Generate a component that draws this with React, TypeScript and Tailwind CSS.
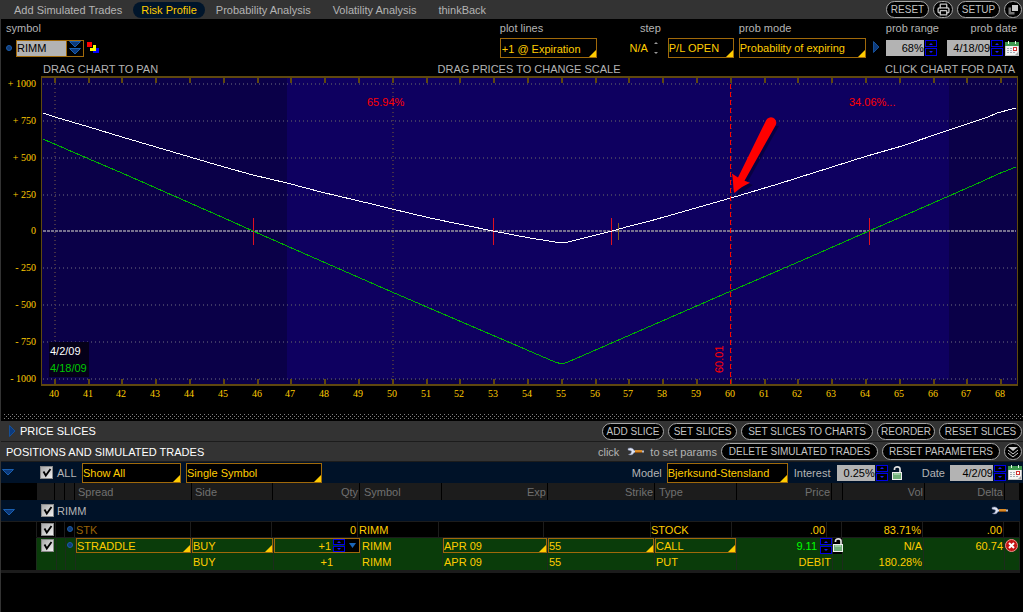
import React from 'react';
import { Printer } from 'lucide-react';

const tabs = ['Add Simulated Trades', 'Risk Profile', 'Probability Analysis', 'Volatility Analysis', 'thinkBack'];

const headers = [
  { name: 'Spread', align: 'text-left pl-[3px]' },
  { name: 'Side', align: 'text-left pl-[3px]' },
  { name: 'Qty', align: 'text-right pr-px' },
  { name: 'Symbol', align: 'text-left pl-1' },
  { name: 'Exp', align: 'text-right pr-px' },
  { name: 'Strike', align: 'text-right pr-px' },
  { name: 'Type', align: 'text-left pl-1' },
  { name: 'Price', align: 'text-right pr-px' },
  { name: '', align: '' },
  { name: 'Vol', align: 'text-right pr-px' },
  { name: 'Delta', align: 'text-right pr-px' },
  { name: '', align: '' }
];

const prices = [1000, 750, 500, 250, 0, -250, -500, -750, -1000];
const strikes = Array.from({ length: 29 }, (_, i) => 40 + i);
const toX = (price: number) => Math.round(54.8 + (price - 40) * 33.8);
const toY = (pl: number) => Math.round(231.4 - pl * 0.1475);

const todayLine =
  '43,113 55,117 89,127 122,137 156,147 190,157 224,167 253,175 287,183 321,192 355,200 376,205 392,209 430,218 493,231 530,238 555,242 562,243 568,242 612,231 630,226 650,221 731,198 778,184 832,167 867,156 902,146 949,130 988,117 997,113 1016,108';
const expirationLine = '43,139 89,159 122,173 156,188 190,203 224,218 253,231 287,246 392,292 555,362 562,364 568,362 630,335 731,291 803,260 869,231 933,203 983,181 998,174 1016,167';

const Dot: React.FC = () => <span className="block h-[6px] w-[6px] shrink-0 rounded-full border border-[#1b5dab] bg-[#123c78]" />;

const DownTriangle: React.FC = () => (
  <svg width="12" height="7" viewBox="0 0 12 7" className="block">
    <path d="M0.5 0.5H11.5L6 6Z" fill="#0c3a7c" stroke="#1a5fb0" />
  </svg>
);

const RightTriangle: React.FC = () => (
  <svg width="7" height="12" viewBox="0 0 7 12" className="block shrink-0">
    <path d="M0.5 0.5V11.5L6 6Z" fill="#0c3a7c" stroke="#164f96" />
  </svg>
);

const Select: React.FC<{ label: string; value: string; className?: string; id?: string }> = ({ label, value, className = '', id }) => (
  <span className={`relative block border border-[#a0690a] ${className}`}>
    <select id={id} aria-label={label} className="block h-full w-full appearance-none bg-transparent text-[#ffcc00] outline-none">
      <option>{value}</option>
    </select>
    <svg width="7" height="7" viewBox="0 0 7 7" className="pointer-events-none absolute right-0 bottom-0">
      <path d="M7 0V7H0Z" fill="#ffcc00" />
    </svg>
  </span>
);

const Spinner: React.FC<{ label: string; small?: boolean }> = ({ label, small }) => (
  <span className="flex w-3 shrink-0 flex-col gap-px">
    <button aria-label={`Increase ${label}`} className={`flex items-center justify-center border border-[#0000e6] bg-black ${small ? 'h-[6px]' : 'h-[7px]'}`}>
      <svg width="4" height="2" viewBox="0 0 4 2" className="block"><path d="M0 2L2 0L4 2Z" fill="#1a1aff" /></svg>
    </button>
    <button aria-label={`Decrease ${label}`} className={`flex items-center justify-center border border-[#0000e6] bg-black ${small ? 'h-[6px]' : 'h-2'}`}>
      <svg width="4" height="2" viewBox="0 0 4 2" className="block"><path d="M0 0L2 2L4 0Z" fill="#1a1aff" /></svg>
    </button>
  </span>
);

const Field: React.FC<{ id: string; value: string; className: string }> = ({ id, value, className }) => (
  <input id={id} type="text" defaultValue={value} className={`block h-4 shrink-0 bg-[#b3b3b3] text-right text-black outline-none ${className}`} />
);

const Calendar: React.FC = () => (
  <svg width="14" height="15" viewBox="0 0 14 15" className="block shrink-0">
    <rect x="0.5" y="1.5" width="13" height="13" fill="#f4f4f4" stroke="#c4c4c4" />
    <rect x="0" y="1" width="14" height="4" fill="#3f9a4f" />
    <path d="M3.5 0V3M10.5 0V3" stroke="#e8ffe8" />
    <path d="M2 7.5h5M2 9.5h5M2 11.5h9" stroke="#a4aab4" strokeDasharray="2 1" />
    <rect x="8.5" y="6.5" width="3" height="3" fill="#fff" stroke="#d03030" />
    <path d="M10 14L13 11V14Z" fill="#aaa" />
  </svg>
);

const Lock: React.FC = () => (
  <svg width="10" height="14" viewBox="0 0 10 14" className="block shrink-0">
    <path d="M2.5 4V3C2.5 1.6 3.8 0.9 5.2 0.9S8 1.6 8 3V6" fill="none" stroke="#e2e2e2" strokeWidth="1.7" />
    <rect x="0.5" y="6.5" width="9" height="7" fill="#6fae78" stroke="#eeeeee" />
    <path d="M2 8h6" stroke="#c4e6c8" />
  </svg>
);

const Wrench: React.FC = () => (
  <svg width="17" height="9" viewBox="0 0 17 9" className="block shrink-0">
    <path d="M1 1.5C4 0 6.5 1.5 7 3.5H9V5.5H7C6 8 3.5 8.5 1.5 7.5L4 6.5L4.5 4L1 3Z" fill="#dfe4f2" stroke="#7a86aa" strokeWidth="0.5" />
    <rect x="8" y="3" width="7" height="3" fill="#d98a26" />
    <path d="M8 5.5H15" stroke="#8c4f10" />
    <rect x="15" y="3.5" width="2" height="2" fill="#b9bccb" />
  </svg>
);

const Check: React.FC<{ label: string; id?: string }> = ({ label, id }) => (
  <span className="relative block h-[13px] w-[13px] shrink-0">
    <input
      id={id}
      type="checkbox"
      defaultChecked
      aria-label={label}
      className="peer block h-[13px] w-[13px] appearance-none border border-[#8a8a8a] bg-gradient-to-br from-[#a8a8a8] to-[#f2f2f2]"
    />
    <svg width="13" height="13" viewBox="0 0 13 13" className="pointer-events-none absolute inset-0 hidden peer-checked:block">
      <path d="M3.5 5.5L5.8 9.5L10.5 3" fill="none" stroke="#000" strokeWidth="1.8" />
    </svg>
  </span>
);

const Pill: React.FC<{ className: string; children: React.ReactNode; label?: string }> = ({ className, children, label }) => (
  <button
    aria-label={label}
    className={`flex h-[17px] shrink-0 items-center justify-center rounded-full border border-[#a8a8a8] bg-black text-[10px] leading-none whitespace-nowrap text-[#c4c4c4] ${label ? '' : 'pt-px'} ${className}`}
  >
    {children}
  </button>
);

const Chart: React.FC = () => (
  <svg viewBox="1 76 1022 337" className="block h-auto w-full" shapeRendering="crispEdges" role="img" aria-label="Risk profile chart">
    <rect x="42" y="77" width="975" height="308" fill="#0a0048" />
    <rect x="287" y="78" width="662" height="301" fill="#0e0060" />

    {/* Grid */}
    {prices.map((p) => (
      <path
        key={p}
        d={`M43 ${toY(p)}H1016`}
        stroke={p === 0 ? '#77718f' : '#3d3764'}
        strokeWidth="2"
        strokeDasharray={p === 0 ? '3 1' : '1 3'}
      />
    ))}
    {[40, 50, 60].map((p) => (
      <path key={p} d={`M${toX(p)} 84V384`} stroke="#443048" strokeWidth="2" strokeDasharray="1 3" />
    ))}

    {/* Frame and ticks */}
    <path d="M41 77H1018M41 385H1018" stroke="#5f480e" strokeWidth="2" />
    <path d="M41.5 76V386M1017.5 76V386" stroke="#5f480e" />
    {strikes.map((s) => (
      <path key={s} d={`M${toX(s)} 78V83M${toX(s)} 379V384`} stroke="#5f480e" strokeWidth="2" />
    ))}

    {/* Profit and loss curves */}
    <path d="M253.5 218V245M493.5 218V245M611.5 218V245M869.5 218V245" stroke="#e01020" />
    <path d="M618.5 223V240" stroke="#80601c" />
    <polyline points={expirationLine} fill="none" stroke="#00b400" />
    <polyline points={todayLine} fill="none" stroke="#ffffff" />
    <path d="M730.5 84V384" stroke="#ff0000" strokeDasharray="5 3" />

    {/* Arrow */}
    <g shapeRendering="auto">
      <path d="M779 126L747 183L753 185L737 196L740 183L769 125Z" fill="#000020" opacity="0.45" />
      <path d="M766 120.5A5.3 5.3 0 0 1 775.8 125L744.5 180.8L750 182.8C744 185.5 739 189 734.5 193C733 191 733.5 179 731.8 173.5L738 177.5Z" fill="#ff0000" />
    </g>

    <g fontFamily="'Liberation Sans', Arial, sans-serif" fontSize="11">
      <text x="367" y="106" fill="#ff0000">65.94%</text>
      <text x="849" y="106" fill="#ff0000">34.06%...</text>
      <text transform="translate(723 373) rotate(-90)" fill="#ff0000">60.01</text>
      <rect x="49" y="342" width="40" height="35" fill="#050018" />
      <text x="50" y="355" fill="#ffffff">4/2/09</text>
      <text x="50" y="372" fill="#00c800">4/18/09</text>
    </g>

    {/* Axis labels */}
    <g fontFamily="'Liberation Serif', 'Times New Roman', serif" fontSize="10" fill="#ffcc00">
      {prices.map((p) => (
        <text key={p} x="36" y={toY(p) + 3} textAnchor="end">
          {p === 0 ? '0' : `${p > 0 ? '+' : '-'} ${Math.abs(p)}`}
        </text>
      ))}
      {strikes.map((s) => (
        <text key={s} x={toX(s) - 1} y="397" textAnchor="middle">{s}</text>
      ))}
    </g>
  </svg>
);

const App: React.FC = () => {
  return (
    <div className="min-h-screen border-l border-[#333333] bg-black font-['Liberation_Sans',Arial,sans-serif] text-[11px] leading-[14px] text-[#b4b4b4]">
      {/* Tabs */}
      <nav className="flex h-[19px] items-center gap-[6px] bg-[#333333] pr-px pl-[5px]">
        {tabs.map((tab) => (
          <button
            key={tab}
            className={`flex h-4 items-center rounded-full px-2 whitespace-nowrap ${tab === 'Risk Profile' ? '-mx-[3px] bg-[#00152b] text-[#ffcc00]' : ''}`}
          >
            {tab}
          </button>
        ))}
        <div className="ml-auto flex items-center gap-1">
          <Pill className="w-[43px]">RESET</Pill>
          <Pill className="w-5" label="Print"><Printer size={13} strokeWidth={2.5} /></Pill>
          <Pill className="w-[43px]">SETUP</Pill>
          <Pill className="w-[18px]" label="Detach">
            <svg width="11" height="11" viewBox="0 0 11 11">
              <rect x="0.5" y="3.5" width="6" height="7" fill="#777" />
              <rect x="3.5" y="0.5" width="7" height="7" fill="#ccc" stroke="#000" />
            </svg>
          </Pill>
        </div>
      </nav>

      {/* Chart settings */}
      <div className="flex justify-between pr-1 pl-[5px]">
        <div>
          <label htmlFor="symbol" className="block h-[19px] pt-[2px]">symbol</label>
          <div className="flex h-5 items-center">
            <Dot />
            <div className="ml-[4px] flex h-[17px] border border-[#a0690a]">
              <input id="symbol" defaultValue="RIMM" className="w-[49px] bg-[#b3b3b3] text-black outline-none" />
              <button aria-label="Symbol list" className="flex w-[17px] flex-col items-center justify-center border-l border-[#a0690a]">
                <DownTriangle />
                <DownTriangle />
              </button>
            </div>
            <svg width="12" height="12" viewBox="0 0 12 12" className="ml-[3px]" shapeRendering="crispEdges">
              <path d="M6 3H9V9H3V6H6Z" fill="#ffff00" />
              <rect width="5" height="5" fill="#ff0000" />
              <path d="M9 6H12V11H6V9H9Z" fill="#0000ff" />
            </svg>
          </div>
        </div>

        <div className="flex">
          <div>
            <label htmlFor="plot" className="block h-[19px] pt-[2px]">plot lines</label>
            <Select id="plot" label="plot lines" value="+1 @ Expiration" className="h-5 w-[97px] pt-px pl-px" />
          </div>
          <div className="w-[64px] pl-[7px]">
            <div className="h-[19px] pt-[2px] text-right">step</div>
            <div className="flex h-5 items-center justify-end gap-[6px] pr-[3px] text-[#ffcc00]">
              <span>N/A</span>
              <svg width="4" height="12" viewBox="0 0 4 12"><path d="M0 2L2 0L4 2ZM0 10L2 12L4 10Z" fill="#999" /></svg>
            </div>
          </div>
          <div className="mt-[19px] ml-[7px]">
            <Select label="step value" value="P/L OPEN" className="h-5 w-[66px]" />
          </div>
          <div className="ml-[5px]">
            <label htmlFor="mode" className="block h-[19px] pt-[2px]">prob mode</label>
            <Select id="mode" label="prob mode" value="Probability of expiring" className="h-5 w-[127px]" />
          </div>
          <div className="mt-[22px] ml-[7px]"><RightTriangle /></div>
          <div className="ml-[6px]">
            <label htmlFor="range" className="block h-[19px] pt-[2px] text-right">prob range</label>
            <div className="flex h-5 items-center gap-px">
              <Field id="range" value="68%" className="w-[38px]" />
              <Spinner label="prob range" />
            </div>
          </div>
          <div className="ml-2">
            <label htmlFor="date" className="block h-[19px] pt-[2px] pr-[2px] text-right">prob date</label>
            <div className="flex h-5 items-center gap-px">
              <Field id="date" value="4/18/09" className="w-[43px]" />
              <Spinner label="prob date" />
              <button aria-label="Pick date" className="ml-px"><Calendar /></button>
            </div>
          </div>
        </div>
      </div>

      {/* Hints */}
      <div className="grid h-[18px] grid-cols-3 pt-1 pr-2 pl-[42px] whitespace-nowrap">
        <span>DRAG CHART TO PAN</span>
        <span className="text-center">DRAG PRICES TO CHANGE SCALE</span>
        <span className="text-right">CLICK CHART FOR DATA</span>
      </div>

      <Chart />

      <svg className="mb-[2px] block h-[6px] w-full" shapeRendering="crispEdges">
        <defs>
          <pattern id="grip" width="4" height="4" patternUnits="userSpaceOnUse">
            <rect x="3" y="1" width="1" height="1" fill="#808080" />
            <rect x="1" y="3" width="1" height="1" fill="#808080" />
          </pattern>
        </defs>
        <rect x="3" width="100%" height="6" fill="url(#grip)" />
      </svg>

      {/* Price slices */}
      <div className="flex h-5 items-center gap-1 bg-[#333333] pr-px pl-2">
        <button className="mr-auto flex items-center gap-1 text-white"><RightTriangle />PRICE SLICES</button>
        <Pill className="w-[62px]">ADD SLICE</Pill>
        <Pill className="w-[69px]">SET SLICES</Pill>
        <Pill className="w-[132px]">SET SLICES TO CHARTS</Pill>
        <Pill className="w-[58px]">REORDER</Pill>
        <Pill className="w-[83px]">RESET SLICES</Pill>
      </div>

      {/* Positions */}
      <div className="flex h-[21px] items-center gap-1 border-y border-[#1c1c1c] bg-[#333333] pr-px pl-[5px]">
        <h2 className="mr-auto text-white">POSITIONS AND SIMULATED TRADES</h2>
        <span className="mr-1">click</span>
        <Wrench />
        <span className="ml-[2px]">to set params</span>
        <Pill className="w-[157px]">DELETE SIMULATED TRADES</Pill>
        <Pill className="w-[118px]">RESET PARAMETERS</Pill>
        <Pill className="w-[18px]" label="Collapse">
          <svg width="12" height="12" viewBox="0 0 12 12">
            <path d="M1 1H11L6 5Z" fill="#ccc" />
            <path d="M1 4L6 8L11 4M1 7L6 11L11 7" fill="none" stroke="#ccc" />
          </svg>
        </Pill>
      </div>

      <div className="flex h-[21px] items-center bg-[#001228] pr-px pl-px">
        <button aria-label="Collapse all"><DownTriangle /></button>
        <span className="ml-[26px]"><Check id="all" label="ALL" /></span>
        <label htmlFor="all" className="ml-1 w-[25px]">ALL</label>
        <Select label="Filter" value="Show All" className="h-5 w-[99px] bg-black" />
        <Select label="Grouping" value="Single Symbol" className="ml-[5px] h-5 w-[136px] bg-black" />
        <div className="ml-auto flex items-center">
          <label htmlFor="model" className="mr-[5px]">Model</label>
          <Select id="model" label="Model" value="Bjerksund-Stensland" className="h-5 w-[121px] bg-black" />
          <label htmlFor="interest" className="ml-[6px] w-[43px]">Interest</label>
          <span className="flex gap-px"><Field id="interest" value="0.25%" className="w-[38px]" /><Spinner label="Interest" /></span>
          <span className="mr-5 ml-1"><Lock /></span>
          <label htmlFor="trade-date" className="mr-[5px]">Date</label>
          <span className="flex gap-px"><Field id="trade-date" value="4/2/09" className="w-[43px]" /><Spinner label="Date" /></span>
          <button aria-label="Pick trade date" className="ml-[2px]"><Calendar /></button>
        </div>
      </div>

      <table className="block pr-[3px] whitespace-nowrap">
        <thead className="block">
          <tr className="grid h-[17px] grid-cols-[36px_18px_10px_10px_117fr_81fr_87fr_82fr_106fr_107fr_82fr_95fr_11px_82fr_80fr_15px] text-[#707070] *:border-r *:border-black *:bg-[#1c1c1c] *:pt-[2px] *:font-normal">
            <th className="bg-black!" />
            <th />
            <th />
            <th />
            {headers.map((h, i) => (
              <th key={i} className={h.align}>{h.name}</th>
            ))}
          </tr>
        </thead>
        <tbody className="block">
          <tr className="block">
            <td className="flex h-[22px] items-center border-b border-[#1c1c1c] bg-[#001228] pl-[2px]">
              <button aria-label="Collapse RIMM" className="mt-1"><DownTriangle /></button>
              <span className="ml-[26px]"><Check id="rimm" label="RIMM" /></span>
              <label htmlFor="rimm" className="ml-[3px]">RIMM</label>
              <button aria-label="Set params" className="mr-3 ml-auto"><Wrench /></button>
            </td>
          </tr>
          <tr className="grid h-4 grid-cols-[36px_19px_9px_10px_116fr_81fr_86fr_81fr_105fr_107fr_81fr_95fr_15px_81fr_81fr_16px] text-[#ffcc00] *:border-r *:border-b *:border-[#1c1c1c] *:pt-px">
            <td className="border-b-transparent!" />
            <td className="pl-1"><Check label="Stock" /></td>
            <td />
            <td className="pt-1! pl-[2px]"><Dot /></td>
            <td className="pl-px text-[#996408]">STK</td>
            <td />
            <td className="pr-px text-right">0</td>
            <td className="pl-px">RIMM</td>
            <td />
            <td />
            <td>STOCK</td>
            <td className="pr-px text-right">.00</td>
            <td />
            <td className="pr-px text-right">83.71%</td>
            <td className="pr-px text-right">.00</td>
            <td />
          </tr>
          <tr className="grid h-4 grid-cols-[36px_20px_9px_10px_116fr_82fr_87fr_82fr_105fr_107fr_82fr_96fr_10px_81fr_81fr_15px] text-[#ffcc00] *:border-r *:border-[#1c2c1c] *:bg-[#0a3c0a]">
            <td className="bg-black!" />
            <td className="pt-px pl-1"><Check label="Straddle" /></td>
            <td />
            <td className="pt-1 pl-px"><Dot /></td>
            <td><Select label="Spread" value="STRADDLE" className="h-[15px]" /></td>
            <td><Select label="Side" value="BUY" className="h-[15px]" /></td>
            <td>
              <div className="flex h-[15px] items-center border border-[#a0690a]">
                <input aria-label="Quantity" defaultValue="+1" className="w-0 grow bg-transparent pr-[2px] text-right outline-none" />
                <Spinner label="quantity" small />
                <button aria-label="Quantity list" className="flex h-[13px] w-[14px] items-center justify-center bg-black">
                  <svg width="7" height="5" viewBox="0 0 7 5"><path d="M0 0H7L3.5 5Z" fill="#1b66b8" /></svg>
                </button>
              </div>
            </td>
            <td className="pt-px pl-px">RIMM</td>
            <td><Select label="Exp" value="APR 09" className="h-[15px]" /></td>
            <td><Select label="Strike" value="55" className="h-[15px]" /></td>
            <td><Select label="Type" value="CALL" className="h-[15px]" /></td>
            <td className="flex justify-end gap-[3px]">
              <input aria-label="Price" defaultValue="9.11" className="w-0 grow bg-transparent text-right text-[#00ff00] outline-none" />
              <Spinner label="price" />
            </td>
            <td className="bg-black!"><Lock /></td>
            <td className="pt-px pr-px text-right">N/A</td>
            <td className="pt-px pr-px text-right">60.74</td>
            <td>
              <button aria-label="Delete trade" className="block pt-px">
                <svg width="13" height="13" viewBox="0 0 13 13" className="block">
                  <circle cx="6.5" cy="6.5" r="6" fill="#c41414" stroke="#f09090" />
                  <path d="M4 4L9 9M9 4L4 9" stroke="#fff" strokeWidth="2" />
                </svg>
              </button>
            </td>
          </tr>
          <tr className="grid h-4 grid-cols-[36px_20px_9px_10px_116fr_82fr_87fr_82fr_105fr_107fr_82fr_96fr_10px_81fr_81fr_15px] text-[#ffcc00] *:border-r *:border-[#1c2c1c] *:bg-[#0a3c0a] *:pt-px">
            <td className="bg-black!" />
            <td />
            <td />
            <td />
            <td />
            <td className="pl-px">BUY</td>
            <td className="pr-[27px] text-right">+1</td>
            <td className="pl-px">RIMM</td>
            <td className="pl-px">APR 09</td>
            <td className="pl-px">55</td>
            <td className="pl-px">PUT</td>
            <td className="pr-px text-right">DEBIT</td>
            <td />
            <td className="pr-px text-right">180.28%</td>
            <td />
            <td />
          </tr>
        </tbody>
      </table>
      <div className="mr-[3px] h-[3px] bg-[#1c1c1c]" />
    </div>
  );
};

export default App;
